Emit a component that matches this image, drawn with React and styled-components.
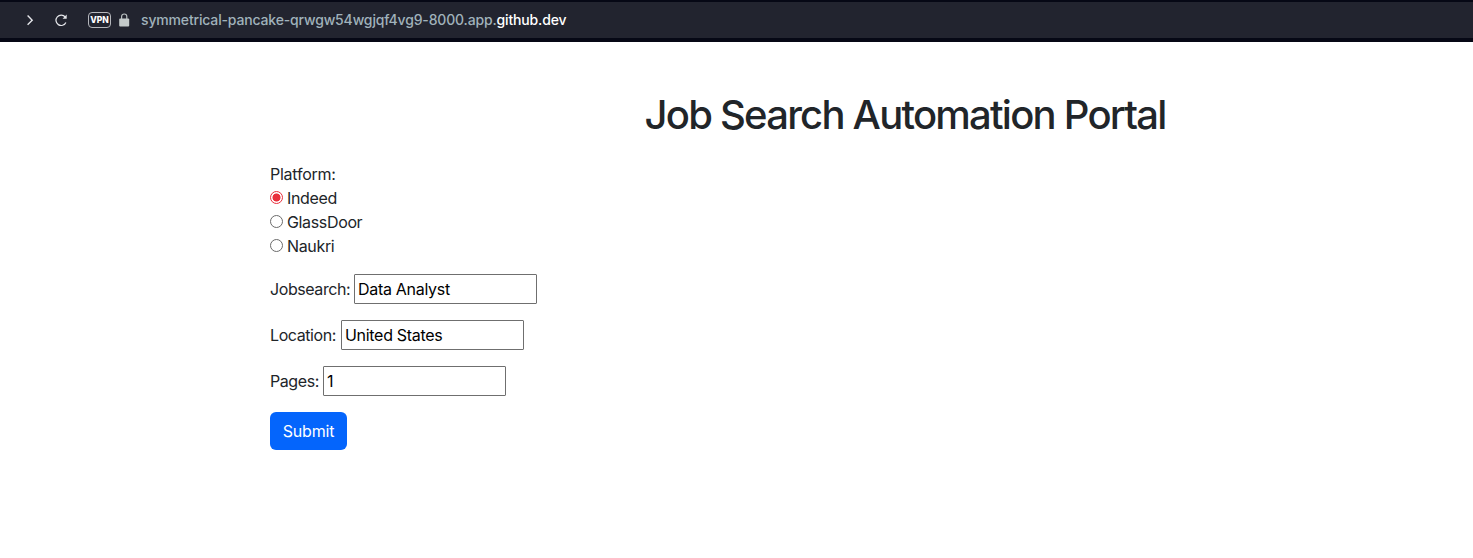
import React from "react";
import styled, { createGlobalStyle } from "styled-components";

const GlobalStyle = createGlobalStyle`
  *, *::before, *::after { box-sizing: border-box; }
  body {
    margin: 0;
    background: #fff;
    color: #212529;
    font-family: Inter, "Liberation Sans", sans-serif;
    font-size: 16px;
    line-height: 24px;
  }
`;

const AddressBar = styled.header`
  display: flex;
  align-items: center;
  height: 42px;
  padding: 0 0 0 24px;
  background: #22242f;
  border-top: 2px solid #060815;
  border-bottom: 4px solid #060815;
`;

const BarIcon = styled.svg`
  display: block;
  flex: none;
  margin-left: ${(p) => p.$gap || 0}px;
  margin-bottom: ${(p) => p.$lift || 0}px;
`;

const VpnBadge = styled.span`
  display: flex;
  align-items: center;
  justify-content: center;
  width: 23px;
  height: 16px;
  margin-left: 20px;
  border: 1.5px solid #b5b7bc;
  border-radius: 4px;
  color: #fff;
  font-size: 8.5px;
  font-weight: 800;
  line-height: 1;
`;

const Url = styled.span`
  margin-left: 11px;
  color: #a0b2bb;
  font-size: 14px;
  font-weight: 500;
  line-height: 20px;
  letter-spacing: -0.16px;
  white-space: nowrap;
`;

const Domain = styled.span`
  color: #fff;
`;

const Page = styled.main`
  padding: 49px 0 0 270px;
`;

const Title = styled.h1`
  width: 1270px;
  margin: 0 0 23px;
  font-size: 40px;
  font-weight: 550;
  line-height: 48px;
  letter-spacing: -1.77px;
  text-align: center;
`;

const Form = styled.form`
  display: flex;
  flex-direction: column;
  align-items: flex-start;
  gap: 16px;
`;

const Text = styled.span`
  letter-spacing: ${(p) => p.$tracking ?? -0.35}px;
  white-space: nowrap;
`;

const RadioGroup = styled.div`
  display: flex;
  flex-direction: column;
`;

const RadioRow = styled.label`
  display: flex;
  align-items: center;
  gap: 4px;
  height: 24px;
`;

const Radio = styled.input`
  appearance: none;
  width: 13px;
  height: 13px;
  margin: 0 0 2px;
  border: 1px solid #6b6b6b;
  border-radius: 50%;
  background: #fff;

  &:checked {
    border-color: #e9303d;
    background: radial-gradient(circle at center, #e9303d 3.6px, #fff 4.4px);
  }
`;

const Field = styled.label`
  display: flex;
  align-items: center;
  height: 30px;
`;

const FieldName = styled(Text)`
  width: ${(p) => p.$width}px;
`;

const Input = styled.input`
  width: 183px;
  height: 30px;
  padding: 1px 3px;
  border: 1px solid #6f6f6f;
  border-radius: 1px;
  background: #fff;
  color: #000;
  font: inherit;
  letter-spacing: -0.3px;
  outline: none;
`;

const Submit = styled.button`
  width: 77px;
  height: 38px;
  padding: 0;
  border: 0;
  border-radius: 6px;
  background: #0465fc;
  color: #fff;
  font: inherit;
  letter-spacing: -0.15px;
`;

const platforms = [
  { name: "Indeed", checked: true },
  { name: "GlassDoor" },
  { name: "Naukri" },
];

const fields = [
  { name: "Jobsearch:", width: 84, value: "Data Analyst" },
  { name: "Location:", width: 71, value: "United States" },
  { name: "Pages:", width: 53, value: "1" },
];

export default function App() {
  return (
    <>
      <GlobalStyle />
      <AddressBar>
        <BarIcon width="12" height="14" viewBox="0 0 12 14" fill="none" stroke="#e4e5e9" strokeWidth="1.4">
          <path d="M3.6 2.6 8.2 7.2 3.6 11.8" />
        </BarIcon>
        <BarIcon $gap={18} width="14" height="14" viewBox="0 0 14 14" fill="none">
          <path d="M11.9 9.4A5.2 5.2 0 1 1 11.2 4" stroke="#e4e5e9" strokeWidth="1.2" />
          <path d="M12.7 1.6V5.8H8.6Z" fill="#e4e5e9" />
        </BarIcon>
        <VpnBadge>VPN</VpnBadge>
        <BarIcon $gap={8} $lift={1} width="11" height="14" viewBox="0 0 11 14">
          <path d="M2.6 6V3.6a2.6 2.6 0 0 1 5.2 0V6" fill="none" stroke="#b9bfc1" strokeWidth="1.2" />
          <rect x="0.2" y="5.4" width="10" height="8.2" rx="1" fill="#c4caca" />
        </BarIcon>
        <Url>
          symmetrical-pancake-qrwgw54wgjqf4vg9-8000.app.<Domain>github.dev</Domain>
        </Url>
      </AddressBar>
      <Page>
        <Title>Job Search Automation Portal</Title>
        <Form onSubmit={(e) => e.preventDefault()}>
          <RadioGroup>
            <Text $tracking={-0.25}>Platform:</Text>
            {platforms.map((p) => (
              <RadioRow key={p.name}>
                <Radio type="radio" name="platform" defaultChecked={p.checked} />
                <Text>{p.name}</Text>
              </RadioRow>
            ))}
          </RadioGroup>
          {fields.map((f) => (
            <Field key={f.name}>
              <FieldName $width={f.width} $tracking={-0.42}>{f.name}</FieldName>
              <Input type="text" defaultValue={f.value} />
            </Field>
          ))}
          <Submit type="submit">Submit</Submit>
        </Form>
      </Page>
    </>
  );
}
